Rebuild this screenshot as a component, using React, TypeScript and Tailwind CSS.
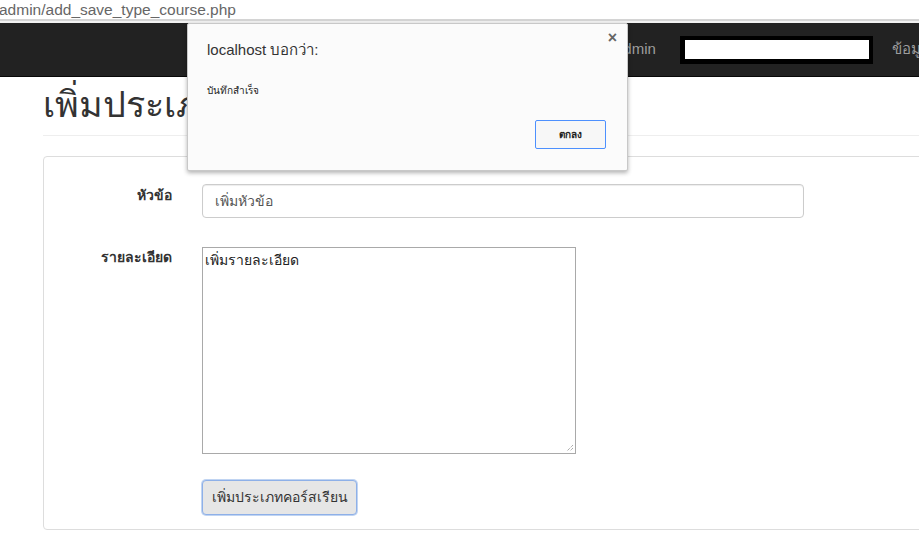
import React from "react";

const font = { fontFamily: '"Liberation Sans", Tahoma, "Noto Sans", sans-serif' };

export default function App() {
  return (
    <div className="relative w-[919px] h-[542px] overflow-hidden bg-white text-[#333]" style={font}>
      {/* address bar */}
      <div className="h-[21px] bg-white border-b-2 border-[#d4d4d4] overflow-hidden">
        <div className="-ml-[1px] pt-[1px] text-[15.5px] leading-[18px] text-[#666] whitespace-nowrap">admin/add_save_type_course.php</div>
      </div>
      <div className="h-[2px] bg-[#f1f1f1]" />
      {/* navbar */}
      <div className="h-[54px] bg-[#222] border-b border-[#080808] flex items-center pl-[615px] whitespace-nowrap overflow-hidden">
        <span className="text-[15px] text-[#9d9d9d]">admin</span>
        <div className="ml-[24px] w-[194px] h-[28px] bg-black p-[4px] pl-[5px]">
          <div className="w-[184px] h-[19px] bg-white" />
        </div>
        <span className="ml-[19px] text-[15px] text-[#9d9d9d]">ข้อมูลส่วนตัว</span>
      </div>
      {/* content */}
      <div className="pl-[43px]">
        <div className="mt-[8px] pb-[10px] border-b border-[#eee] w-[900px]">
          <h1 className="text-[36px] leading-[40px] font-medium text-[#333] whitespace-nowrap">เพิ่มประเภทคอร์สเรียน</h1>
        </div>
        <div className="mt-[20px] w-[900px] h-[374px] border border-[#ddd] rounded-[4px] pt-[27px]">
          <div className="flex items-start">
            <label className="w-[128px] text-right font-bold text-[14px] pt-[1px]">หัวข้อ</label>
            <div className="ml-[30px] w-[602px] h-[34px] border border-[#ccc] rounded-[4px] px-[12px] flex items-center text-[14px] text-[#555] shadow-[inset_0_1px_1px_rgba(0,0,0,0.075)]">
              เพิ่มหัวข้อ
            </div>
          </div>
          <div className="flex items-start mt-[29px]">
            <label className="w-[128px] text-right font-bold text-[14px] pt-[0px]">รายละเอียด</label>
            <div className="relative ml-[30px] w-[374px] h-[207px] border border-[#a9a9a9] px-[2px] pt-[4px] text-[14px] leading-[16px] text-[#222]">
              เพิ่มรายละเอียด
              <svg className="absolute right-[1px] bottom-[1px]" width="9" height="9" viewBox="0 0 9 9">
                <path d="M8 2 L2 8 M8 5 L5 8" stroke="#888" strokeWidth="1" strokeDasharray="1 1" />
              </svg>
            </div>
          </div>
          <div className="mt-[26px] ml-[158px]">
            <button className="w-[155px] h-[35px] bg-[#e6e6e6] border border-[#8eb0e8] rounded-[4px] text-[14px] text-[#333] shadow-[0_0_0_1px_rgba(130,170,230,0.5)]">
              เพิ่มประเภทคอร์สเรียน
            </button>
          </div>
        </div>
      </div>
      {/* alert dialog */}
      <div className="absolute left-[187px] top-[23px] w-[441px] h-[148px] bg-[#fbfbfb] border border-[#c8c8c8] rounded-[2px] shadow-[0_2px_4px_rgba(0,0,0,0.3)]">
        <div className="absolute left-[19px] top-[15px] text-[15px] text-[#333]">localhost บอกว่า:</div>
        <div className="absolute right-[10px] top-[6px] text-[16px] font-bold text-[#666] leading-none">×</div>
        <div className="absolute left-[19px] top-[59px] text-[10px] text-[#222]">บันทึกสำเร็จ</div>
        <div className="absolute left-[347px] top-[96px] w-[71px] h-[29px] border border-[#4d90fe] rounded-[2px] bg-[#f7f7f7] flex items-center justify-center text-[10px] font-bold text-[#222]">
          ตกลง
        </div>
      </div>
    </div>
  );
}
